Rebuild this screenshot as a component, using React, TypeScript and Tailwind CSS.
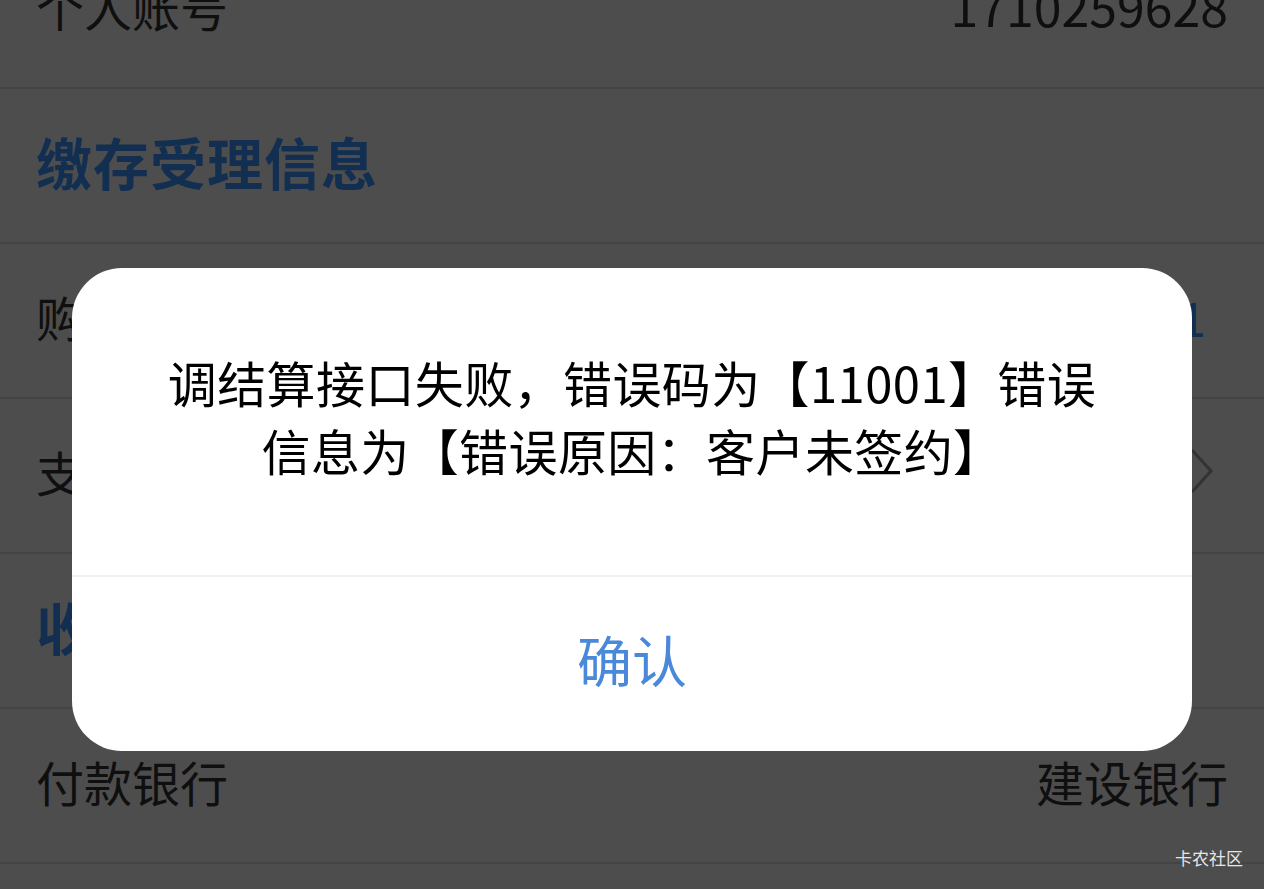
import React from "react";

const font = { fontFamily: '"Noto Sans CJK SC", "Noto Sans", sans-serif' };

function Row({ children, className = "" }: { children: React.ReactNode; className?: string }) {
  return (
    <div className={`flex h-[155px] items-center justify-between border-b-2 border-[#444444] px-9 pb-[10px] ${className}`}>
      {children}
    </div>
  );
}

export default function App() {
  return (
    <div className="relative h-[889px] w-[1264px] overflow-hidden bg-[#4d4d4d]" style={font}>
      <div className="-mt-[66px] flex flex-col">
        <Row>
          <span className="text-[48px] text-[#0f0f0f]">个人账号</span>
          <span className="text-[50px] text-[#0f0f0f]">1710259628</span>
        </Row>
        <Row>
          <span className="text-[56px] font-bold tracking-[1px] text-[#122f52]">缴存受理信息</span>
        </Row>
        <Row>
          <span className="text-[48px] text-[#0f0f0f]">购房合同编号</span>
          <span className="pr-[22px] text-[48px] text-[#122f52]">20230001</span>
        </Row>
        <Row>
          <span className="text-[48px] text-[#0f0f0f]">支付方式</span>
          <span className="flex items-center gap-4 pr-[14px] text-[48px] text-[#0f0f0f]">
            <svg width="24" height="46" viewBox="0 0 24 46" fill="none">
              <path d="M2 2 L21 23 L2 44" stroke="#333333" strokeWidth="3" />
            </svg>
          </span>
        </Row>
        <Row>
          <span className="text-[56px] font-bold tracking-[1px] text-[#122f52]">收款信息</span>
        </Row>
        <Row>
          <span className="text-[48px] text-[#0f0f0f]">付款银行</span>
          <span className="text-[48px] text-[#0f0f0f]">建设银行</span>
        </Row>
        <Row>
          <span className="text-[48px] text-[#0f0f0f]">付款账号</span>
        </Row>
      </div>

      <div className="absolute left-[72px] top-[268px] flex h-[483px] w-[1120px] flex-col overflow-hidden rounded-[50px] bg-white">
        <div className="flex h-[309px] items-center justify-center border-b-2 border-[#f1f1f1] px-[90px] pb-[12px]">
          <p className="text-center text-[49px] leading-[68px] tracking-[0.4px] text-black">
            调结算接口失败，错误码为【11001】错误信息为【错误原因：客户未签约】
          </p>
        </div>
        <div className="flex flex-1 items-center justify-center pb-[12px]">
          <span className="text-[55px] text-[#4a88d9]">确认</span>
        </div>
      </div>

      <div className="absolute bottom-[19px] right-[21px] text-[17px] text-[#e6e6e6]">卡农社区</div>
    </div>
  );
}
